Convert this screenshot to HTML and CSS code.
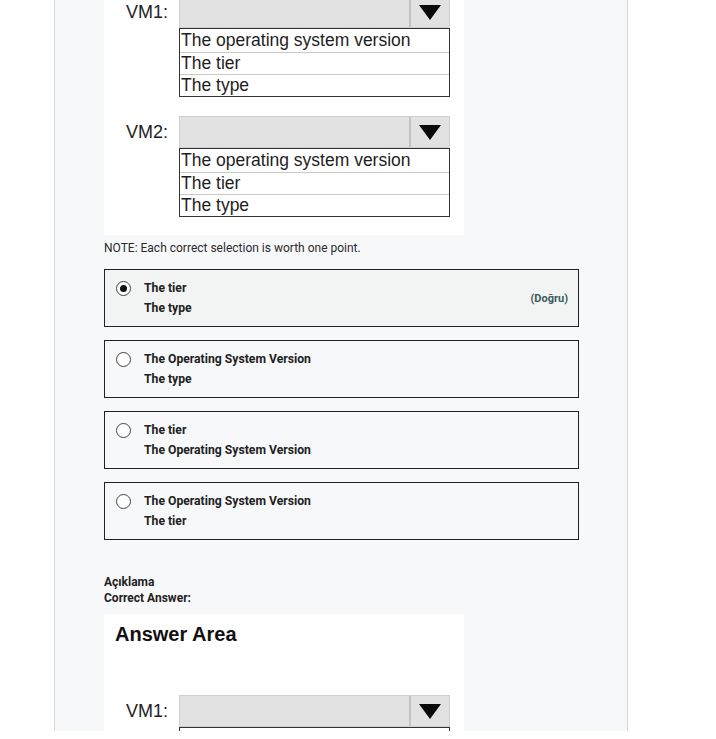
FILE: index.html
```html
<!DOCTYPE html>
<html>
<head>
<meta charset="utf-8">
<link rel="stylesheet" href="styles.css">
</head>
<body>
<div class="viewport">
  <div class="panel">
    <div class="content">
      <div class="answer-img first">
        <div class="aa-title">Answer Area</div>
        <div class="vm-row">
          <div class="vm-label">VM1:</div>
          <div class="vm-box">
            <div class="dd"><div class="dd-field"></div><div class="dd-btn"><span class="tri"></span></div></div>
            <div class="list">
              <div class="li">The operating system version</div>
              <div class="li">The tier</div>
              <div class="li">The type</div>
            </div>
          </div>
        </div>
        <div class="vm-row second">
          <div class="vm-label">VM2:</div>
          <div class="vm-box">
            <div class="dd"><div class="dd-field"></div><div class="dd-btn"><span class="tri"></span></div></div>
            <div class="list">
              <div class="li">The operating system version</div>
              <div class="li">The tier</div>
              <div class="li">The type</div>
            </div>
          </div>
        </div>
      </div>

      <p class="note">NOTE: Each correct selection is worth one point.</p>

      <div class="options">
        <div class="opt correct">
          <span class="radio checked"></span>
          <div class="opt-text"><div>The tier</div><div>The type</div></div>
          <span class="verdict">(Doğru)</span>
        </div>
        <div class="opt">
          <span class="radio"></span>
          <div class="opt-text"><div>The Operating System Version</div><div>The type</div></div>
        </div>
        <div class="opt">
          <span class="radio"></span>
          <div class="opt-text"><div>The tier</div><div>The Operating System Version</div></div>
        </div>
        <div class="opt">
          <span class="radio"></span>
          <div class="opt-text"><div>The Operating System Version</div><div>The tier</div></div>
        </div>
      </div>

      <div class="explain">
        <div>Açıklama</div>
        <div>Correct Answer:</div>
      </div>

      <div class="answer-img">
        <div class="aa-title">Answer Area</div>
        <div class="vm-row">
          <div class="vm-label">VM1:</div>
          <div class="vm-box">
            <div class="dd"><div class="dd-field"></div><div class="dd-btn"><span class="tri"></span></div></div>
            <div class="list">
              <div class="li">The operating system version</div>
              <div class="li">The tier</div>
              <div class="li">The type</div>
            </div>
          </div>
        </div>
      </div>
    </div>
  </div>
</div>
</body>
</html>
```
FILE: styles.css
```css
html, body {
  margin: 0;
  padding: 0;
  background: #ffffff;
}
.viewport {
  height: 731px;
  overflow: hidden;
}
.panel {
  margin-left: 54px;
  width: 523px;
  min-height: 731px;
  padding-left: 49px;
  background: #f7f8fa;
  border-left: 1px solid #d6d7d9;
  border-right: 1px solid #d6d7d9;
  font-family: Roboto, "Liberation Sans", sans-serif;
  color: #222;
}
.content {
  display: flex;
  flex-direction: column;
}
.answer-img {
  width: 360px;
  background: #ffffff;
  padding: 8px 0 18px 0;
  box-sizing: border-box;
  font-family: "Liberation Sans", Arial, sans-serif;
}
.answer-img.first {
  margin-top: -85px;
}
.aa-title {
  font-weight: bold;
  font-size: 20px;
  line-height: 24px;
  padding-left: 11px;
  color: #111;
}
.vm-row {
  display: flex;
  align-items: flex-start;
  margin-top: 49px;
}
.vm-row.second {
  margin-top: 19px;
}
.vm-label {
  width: 64px;
  text-align: right;
  padding-right: 11px;
  font-size: 18px;
  line-height: 32px;
  color: #222;
}
.vm-box {
  width: 271px;
}
.dd {
  display: flex;
  height: 32px;
  background: #e2e2e2;
  border: 1px solid #cfcfcf;
  box-sizing: border-box;
}
.dd-field {
  flex: 1;
}
.dd-btn {
  width: 38px;
  border-left: 2px solid #c4c4c4;
  display: flex;
  align-items: center;
  justify-content: center;
}
.tri {
  width: 0;
  height: 0;
  border-left: 11px solid transparent;
  border-right: 11px solid transparent;
  border-top: 15px solid #0a0a0a;
}
.list {
  border: 1.5px solid #333;
  background: #fff;
}
.li {
  font-size: 17.5px;
  line-height: 21px;
  padding-left: 1px;
  color: #1e1e1e;
  border-top: 1px solid #c9c9c9;
}
.li:first-child {
  border-top: none;
  line-height: 23px;
}
.note {
  margin: 5px 0 0 0;
  font-size: 12px;
  line-height: 16px;
  color: #2a2a2a;
}
.options {
  display: flex;
  flex-direction: column;
  gap: 13px;
  margin-top: 13px;
  width: 475px;
}
.opt {
  display: flex;
  align-items: flex-start;
  border: 1px solid #222;
  padding: 8px 10px 8px 11px;
  min-height: 40px;
  background: #f7f8fa;
}
.opt.correct {
  background: #f1f4f3;
}
.radio {
  width: 13px;
  height: 13px;
  border: 1.3px solid #444;
  border-radius: 50%;
  margin-top: 3px;
  margin-right: 13px;
  flex: none;
  display: flex;
  align-items: center;
  justify-content: center;
  background: #fff;
}
.radio.checked::after {
  content: "";
  width: 7px;
  height: 7px;
  border-radius: 50%;
  background: #111;
}
.opt-text {
  flex: 1;
  font-size: 12.2px;
  font-weight: 700;
  line-height: 20px;
  color: #222;
}
.verdict {
  align-self: center;
  font-size: 11px;
  font-weight: 700;
  color: #3e5a5c;
}
.explain {
  margin-top: 34px;
  font-size: 12px;
  font-weight: 700;
  line-height: 16px;
  color: #222;
}
.explain + .answer-img {
  margin-top: 8px;
}
```
